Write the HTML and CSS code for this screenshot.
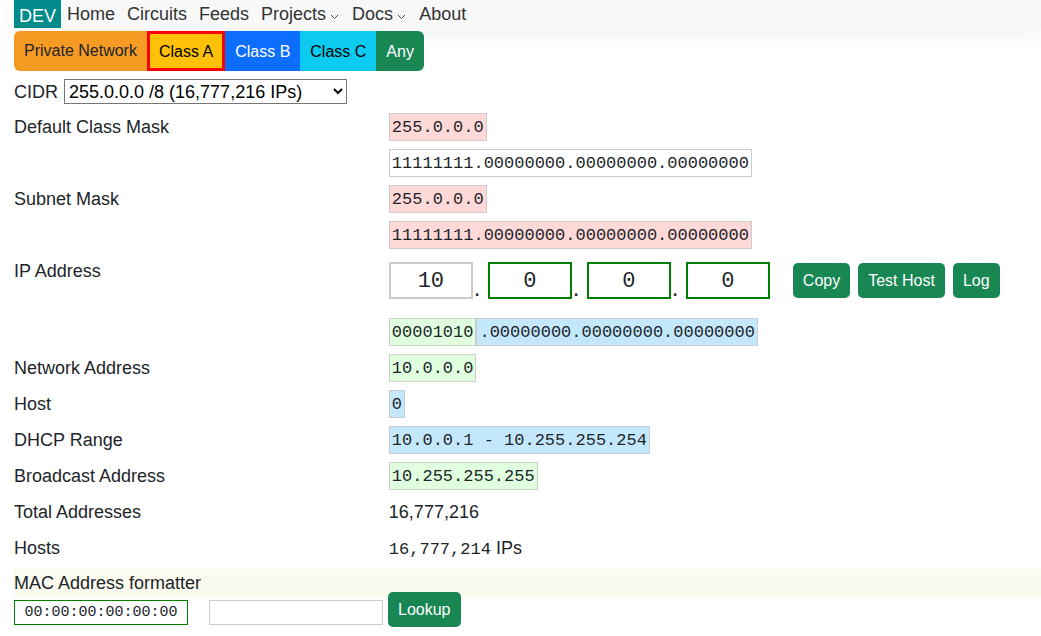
FILE: index.html
```html
<!DOCTYPE html>
<html lang="en">
<head>
<meta charset="utf-8">
<title>Subnet Calculator</title>
<link rel="stylesheet" href="styles.css">
</head>
<body>
<header class="topbar">
  <a class="brand" href="#">DEV</a>
  <nav class="menu">
    <a href="#">Home</a>
    <a href="#">Circuits</a>
    <a href="#">Feeds</a>
    <a href="#">Projects<svg class="caret" viewBox="0 0 9 6"><path d="M1 1l3.5 3.5l3.5-3.5"/></svg></a>
    <a href="#">Docs<svg class="caret" viewBox="0 0 9 6"><path d="M1 1l3.5 3.5l3.5-3.5"/></svg></a>
    <a href="#">About</a>
  </nav>
</header>
<main class="page">
  <div class="classes">
    <span class="cls private">Private Network</span>
    <button class="cls class-a" type="button">Class A</button>
    <button class="cls class-b" type="button">Class B</button>
    <button class="cls class-c" type="button">Class C</button>
    <button class="cls any" type="button">Any</button>
  </div>
  <div class="cidr">
    <label for="cidr">CIDR</label>
    <select id="cidr"><option>255.0.0.0 /8 (16,777,216 IPs)</option></select>
  </div>
  <div class="rows">
    <div class="row"><div>Default Class Mask</div><div><span class="box red">255.0.0.0</span></div></div>
    <div class="row"><div></div><div><span class="box">11111111.00000000.00000000.00000000</span></div></div>
    <div class="row"><div>Subnet Mask</div><div><span class="box red">255.0.0.0</span></div></div>
    <div class="row"><div></div><div><span class="box red">11111111.00000000.00000000.00000000</span></div></div>
    <div class="row"><div>IP Address</div>
      <div class="ip">
        <input class="octet fixed" aria-label="First octet" value="10"><span class="dot">.</span>
        <input class="octet" aria-label="Second octet" value="0"><span class="dot">.</span>
        <input class="octet" aria-label="Third octet" value="0"><span class="dot">.</span>
        <input class="octet" aria-label="Fourth octet" value="0">
        <div class="actions">
          <button class="btn" type="button">Copy</button>
          <button class="btn" type="button">Test Host</button>
          <button class="btn" type="button">Log</button>
        </div>
      </div>
    </div>
    <div class="row"><div></div><div class="pair"><span class="box green">00001010</span><span class="box blue">.00000000.00000000.00000000</span></div></div>
    <div class="row"><div>Network Address</div><div><span class="box green">10.0.0.0</span></div></div>
    <div class="row"><div>Host</div><div><span class="box blue">0</span></div></div>
    <div class="row"><div>DHCP Range</div><div><span class="box blue">10.0.0.1 - 10.255.255.254</span></div></div>
    <div class="row"><div>Broadcast Address</div><div><span class="box green">10.255.255.255</span></div></div>
    <div class="row"><div>Total Addresses</div><div>16,777,216</div></div>
    <div class="row"><div>Hosts</div><div><span class="mono">16,777,214</span> IPs</div></div>
  </div>
  <label class="mac-title" for="mac">MAC Address formatter</label>
  <div class="mac">
    <input class="field active" id="mac" value="00:00:00:00:00:00">
    <input class="field" aria-label="Formatted MAC address">
    <button class="btn lookup" type="button">Lookup</button>
  </div>
</main>
</body>
</html>
```
FILE: styles.css
```css
* { box-sizing: border-box; }
body {
  margin: 0;
  background: #fff;
  color: #212529;
  font: 18px/28px "Liberation Sans", Arial, sans-serif;
}
button, input, select { font: inherit; color: inherit; }
.topbar {
  display: flex;
  margin-left: 14px;
  background: #f8f8f8;
  box-shadow: 0 8px 20px rgba(0, 0, 0, 0.05);
}
.topbar a { color: #333; text-decoration: none; }
.topbar .brand {
  height: 28px;
  padding: 2px 5px 0;
  background: #008b8b;
  color: #fff;
}
.menu { display: flex; gap: 12px; padding-left: 6px; }
.caret {
  width: 9px;
  height: 6px;
  margin: 0 1px 0 4px;
  fill: none;
  stroke: #444;
}
.page { padding: 3px 0 0 14px; }
.classes { display: flex; height: 40px; }
.cls {
  padding: 2px 10px 0;
  border: 0;
  font-size: 16px;
  line-height: 38px;
  white-space: nowrap;
}
.private {
  border-radius: 6px 0 0 6px;
  background: #f59a23;
  line-height: 36px;
}
.class-a { padding: 2px 9px 0; border: 3px solid #f00; background: #ffc107; color: #000; line-height: 32px; }
.class-b { background: #0d6efd; color: #fff; }
.class-c { background: #0dcaf0; color: #000; }
.any { border-radius: 0 6px 6px 0; background: #198754; color: #fff; }
.cidr { display: flex; align-items: center; gap: 6px; height: 25px; margin-top: 8px; }
.cidr select {
  width: 283px;
  height: 25px;
  border: 1px solid #767676;
  border-radius: 0;
  background-color: #fff;
  color: #000;
}
.rows { display: grid; gap: 8px; margin-top: 9px; }
.row { display: grid; grid-template-columns: 36.5% 1fr; min-height: 28px; }
.mono, .box { font-family: "Liberation Mono", monospace; font-size: 17px; }
.mono { line-height: 20px; }
.box {
  display: block;
  width: fit-content;
  height: 28px;
  padding: 0 2px;
  border: 1px solid #ccc;
  line-height: 28px;
  white-space: nowrap;
}
.red { background: #ffd8d8; }
.green { background: #dfffdf; }
.blue { background: #c4e8fb; }
.pair { display: flex; }
.pair .blue { border-left-width: 2px; }
.pair .green { border-right: 0; }
.ip { display: flex; padding: 5px 0 10px; }
.octet {
  width: 84px;
  height: 37px;
  padding: 2px 0 0;
  border: 2px solid #008000;
  background: #fff;
  font: 22px "Liberation Mono", monospace;
  text-align: center;
}
.fixed { border-color: #ccc; }
.dot { width: 15px; padding: 14px 0 0 1px; font-size: 24px; line-height: 24px; }
.actions { display: flex; gap: 8px; margin: 1px 0 0 23px; }
.btn {
  height: 35px;
  padding: 0 10px;
  border: 0;
  border-radius: 5px;
  background: #198754;
  color: #fff;
  font-size: 16px;
  line-height: 35px;
  white-space: nowrap;
}
.mac-title { display: block; margin-top: 7px; background: #fafaef; }
.mac { display: flex; margin-top: 3px; }
.field {
  width: 174px;
  height: 25px;
  margin-right: 21px;
  padding: 0;
  border: 1px solid #ccc;
  background: #fff;
  font: 15px "Liberation Mono", monospace;
  text-align: center;
}
.active { border-color: #008000; }
.lookup { margin: -8px 0 0 -16px; }
```
